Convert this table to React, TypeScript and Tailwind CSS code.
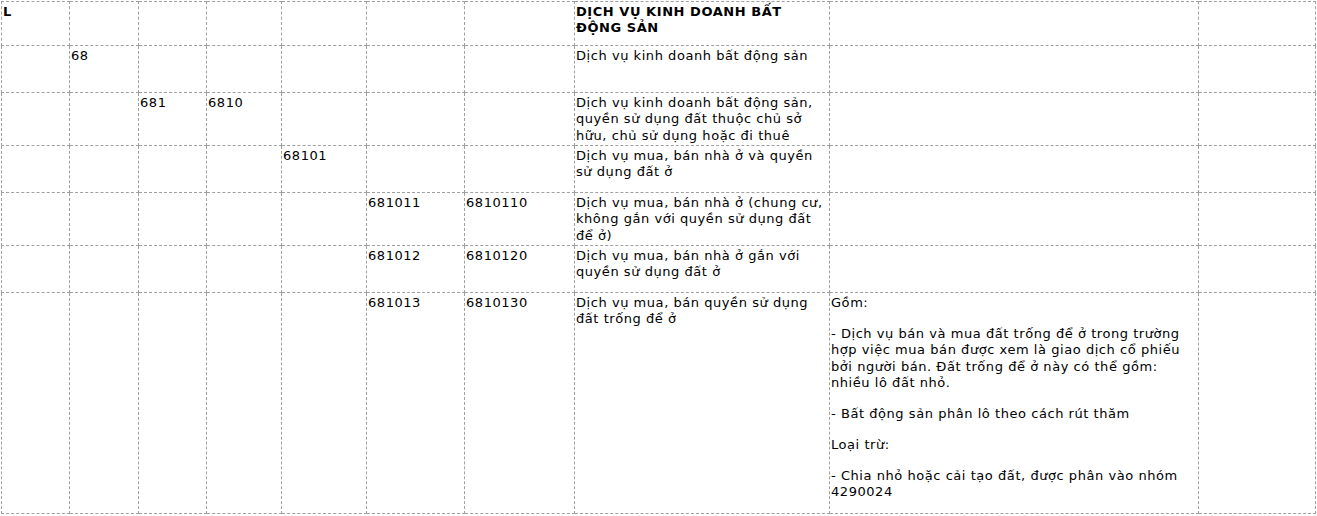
type Row = {
  cells: (string | null)[];
  height: number;
};

const colWidths = [68, 69, 68, 75, 85, 98, 110, 255, 369, 117];

const rows: Row[] = [
  { cells: ["L", "", "", "", "", "", "", "DỊCH VỤ KINH DOANH BẤT ĐỘNG SẢN", "", ""], height: 44 },
  { cells: ["", "68", "", "", "", "", "", "Dịch vụ kinh doanh bất động sản", "", ""], height: 47 },
  {
    cells: [
      "",
      "",
      "681",
      "6810",
      "",
      "",
      "",
      "Dịch vụ kinh doanh bất động sản, quyền sử dụng đất thuộc chủ sở hữu, chủ sử dụng hoặc đi thuê",
      "",
      "",
    ],
    height: 53,
  },
  { cells: ["", "", "", "", "68101", "", "", "Dịch vụ mua, bán nhà ở và quyền sử dụng đất ở", "", ""], height: 47 },
  {
    cells: [
      "",
      "",
      "",
      "",
      "",
      "681011",
      "6810110",
      "Dịch vụ mua, bán nhà ở (chung cư, không gắn với quyền sử dụng đất để ở)",
      "",
      "",
    ],
    height: 53,
  },
  {
    cells: ["", "", "", "", "", "681012", "6810120", "Dịch vụ mua, bán nhà ở gắn với quyền sử dụng đất ở", "", ""],
    height: 47,
  },
];

const notes = [
  "Gồm:",
  "- Dịch vụ bán và mua đất trống để ở trong trường hợp việc mua bán được xem là giao dịch cổ phiếu bởi người bán. Đất trống để ở này có thể gồm: nhiều lô đất nhỏ.",
  "- Bất động sản phân lô theo cách rút thăm",
  "Loại trừ:",
  "- Chia nhỏ hoặc cải tạo đất, được phân vào nhóm 4290024",
];

const cellClass = "border border-dashed border-[#a0a0a0] px-[1px] pt-[2px] align-top";

export default function App() {
  return (
    <div className="bg-white pl-px pt-px font-['DejaVu_Sans',Verdana,sans-serif] text-[13px] leading-[16.3px] tracking-[0.55px] text-black">
      <table className="w-[1315px] table-fixed border-collapse">
        <colgroup>
          {colWidths.map((w, i) => (
            <col key={i} style={{ width: w }} />
          ))}
        </colgroup>
        <tbody>
          {rows.map((row, r) => (
            <tr key={r} style={{ height: row.height }}>
              {row.cells.map((c, i) => (
                <td key={i} className={`${cellClass} ${r === 0 ? "font-bold" : ""}`}>
                  {c}
                </td>
              ))}
            </tr>
          ))}
          <tr className="h-[221px]">
            <td className={cellClass}></td>
            <td className={cellClass}></td>
            <td className={cellClass}></td>
            <td className={cellClass}></td>
            <td className={cellClass}></td>
            <td className={cellClass}>681013</td>
            <td className={cellClass}>6810130</td>
            <td className={cellClass}>Dịch vụ mua, bán quyền sử dụng đất trống để ở</td>
            <td className={cellClass}>
              {notes.map((n, i) => (
                <p key={i} className="mb-[14.7px] last:mb-0">
                  {n}
                </p>
              ))}
            </td>
            <td className={cellClass}></td>
          </tr>
        </tbody>
      </table>
    </div>
  );
}
